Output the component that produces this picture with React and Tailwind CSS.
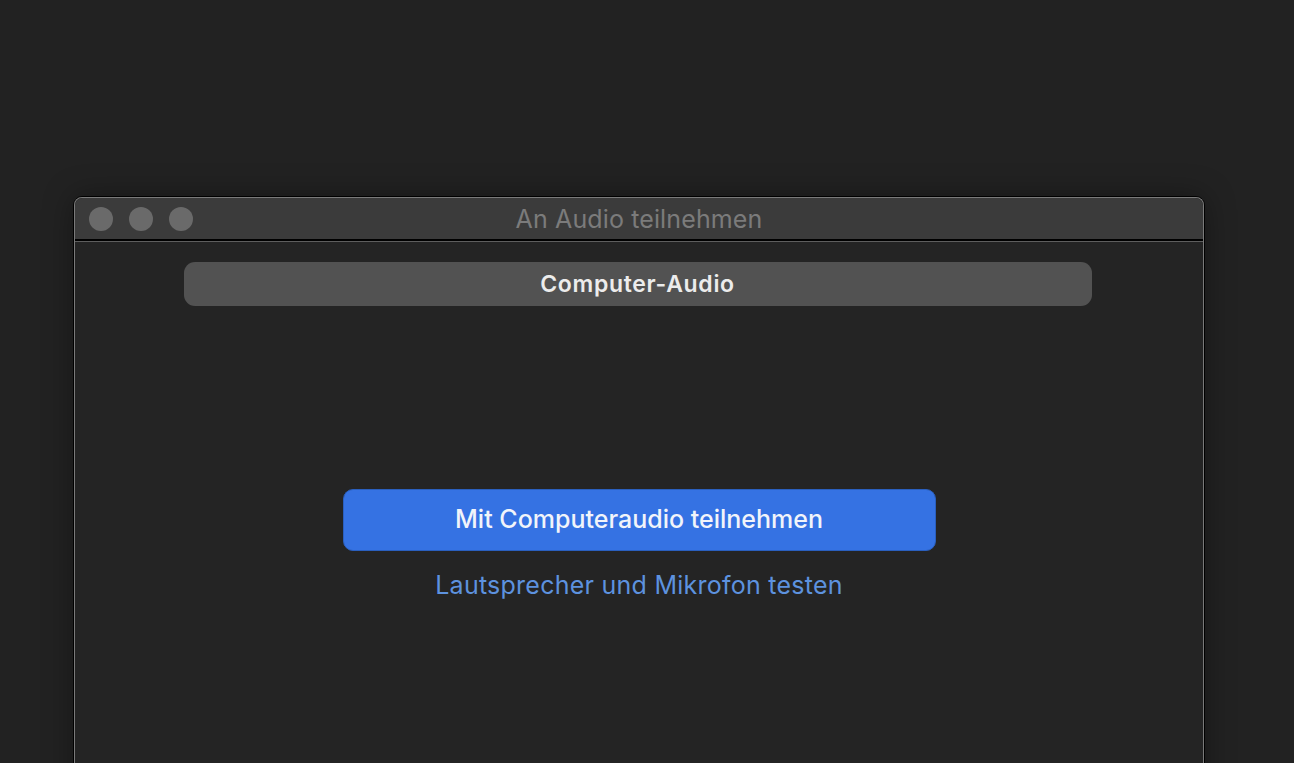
const font = { fontFamily: 'Inter, "Liberation Sans", sans-serif' };

function TrafficLight() {
  return <span className="block h-[24px] w-[24px] rounded-full bg-[#6a6a6a]" />;
}

export default function App() {
  return (
    <div className="h-[763px] w-full overflow-hidden bg-[#222222] pl-[73px] pt-[196px]" style={font}>
      <div className="w-[1132px] h-[700px] rounded-t-[9px] border border-black shadow-[0_0_30px_rgba(0,0,0,0.35)]">
        <div className="flex h-full flex-col rounded-t-[8px] border-x border-t border-[#7a7a7a] bg-[#242424]">
          <div className="relative flex h-[41px] items-center rounded-t-[8px] bg-[#3b3b3b] pl-[14px]">
            <div className="flex gap-[16px]">
              <TrafficLight />
              <TrafficLight />
              <TrafficLight />
            </div>
            <div className="pointer-events-none absolute inset-0 flex items-center justify-center pt-[2px] text-[25px] tracking-[0.005em] text-[#7b7b7b]">
              An Audio teilnehmen
            </div>
          </div>
          <div className="h-[2px] bg-black" />
          <div className="h-[1px] bg-[#5e5e5e]" />
          <div className="flex flex-col items-center pt-[20px]">
            <div className="ml-[-3px] flex h-[44px] w-[908px] items-center justify-center rounded-[11px] bg-[#525252] text-[23px] font-semibold tracking-[0.03em] text-[#ececec]">
              Computer-Audio
            </div>
            <button className="mt-[183px] flex h-[62px] w-[593px] items-center justify-center rounded-[10px] border border-[#2a5fbe] bg-[#3572e3] pb-[1px] text-[25px] font-medium text-[#f1f4fa]">
              Mit Computeraudio teilnehmen
            </button>
            <div className="mt-[16px] text-[25px] tracking-[0.01em] text-[#5d92df]">
              Lautsprecher und Mikrofon testen
            </div>
          </div>
        </div>
      </div>
    </div>
  );
}
